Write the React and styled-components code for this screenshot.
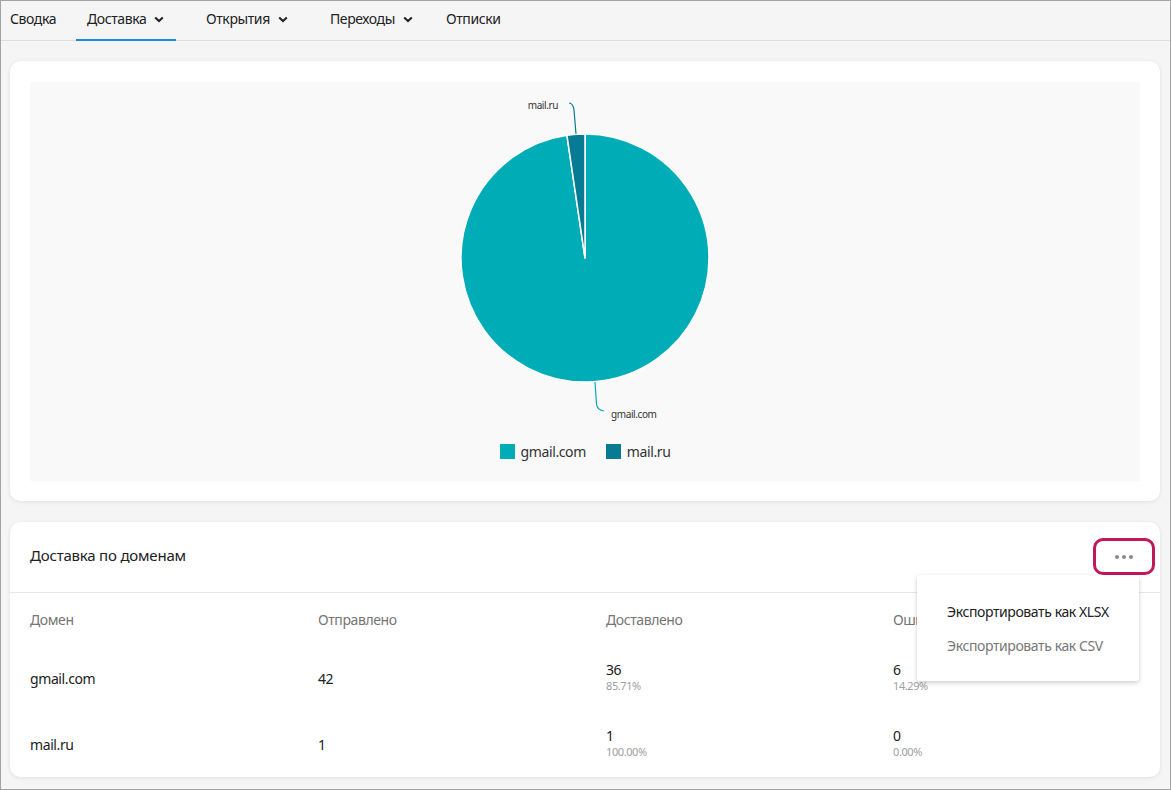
import React from "react";
import styled, { createGlobalStyle } from "styled-components";

const Global = createGlobalStyle`
  html, body { margin: 0; padding: 0; }
  body { font-family: "Noto Sans", "Open Sans", sans-serif; color: #212121; letter-spacing: -0.4px; }
  * { box-sizing: border-box; }
`;

const Frame = styled.div`
  width: 1171px;
  height: 790px;
  border: 1px solid #a3a3a3;
  background: #f5f5f5;
  display: flex;
  flex-direction: column;
  overflow: hidden;
`;

const TabBar = styled.nav`
  height: 40px;
  border-bottom: 1px solid #dedede;
  display: flex;
  align-items: stretch;
  flex-shrink: 0;
`;

const Tab = styled.div`
  position: relative;
  display: flex;
  align-items: center;
  gap: 8px;
  padding-left: ${(p) => p.$pl}px;
  width: ${(p) => p.$w}px;
  margin-right: ${(p) => p.$mr}px;
  font-size: 14px;
  color: #212121;
  padding-bottom: 4px;
  &::after {
    content: "";
    display: ${(p) => (p.$active ? "block" : "none")};
    position: absolute;
    left: 0;
    right: 0;
    bottom: -1px;
    height: 2px;
    background: #1e88e5;
  }
`;

const Chevron = () => (
  <svg width="10" height="7" viewBox="0 0 10 7" style={{ marginTop: 2 }}>
    <path d="M1.2 1.4 L5 5 L8.8 1.4" fill="none" stroke="#212121" strokeWidth="2" />
  </svg>
);

const Content = styled.main`
  flex: 1;
  padding: 20px 9px 0 9px;
  display: flex;
  flex-direction: column;
  gap: 21px;
`;

const Card = styled.section`
  position: relative;
  background: #fff;
  border-radius: 10px;
  box-shadow: 0 1px 4px rgba(0, 0, 0, 0.08), 0 0 1px rgba(0, 0, 0, 0.05);
  width: 1150px;
`;

const ChartCard = styled(Card)`
  height: 440px;
  padding: 21px 20px 20px 20px;
`;

const ChartArea = styled.div`
  background: #f9f9f9;
  height: 399px;
  display: flex;
  flex-direction: column;
  align-items: center;
`;

const Legend = styled.div`
  display: flex;
  align-items: center;
  gap: 20px;
  margin-top: 4px;
  height: 20px;
`;

const LegendItem = styled.div`
  display: flex;
  align-items: center;
  gap: 6px;
  font-size: 14px;
  color: #333;
`;

const Swatch = styled.span`
  width: 15px;
  height: 15px;
  background: ${(p) => p.$c};
  display: inline-block;
`;

const TableCard = styled(Card)`
  height: 255px;
`;

const CardHeader = styled.header`
  height: 71px;
  border-bottom: 1px solid #e6e6e6;
  display: flex;
  align-items: center;
  justify-content: space-between;
  padding: 0 5px 4px 20px;
`;

const Title = styled.h2`
  margin: 0;
  font-size: 15px;
  font-weight: 400;
  letter-spacing: -0.2px;
  color: #212121;
`;

const MoreButton = styled.button`
  width: 62px;
  height: 37px;
  border: 3px solid #c2185b;
  border-radius: 10px;
  background: #fff;
  display: flex;
  align-items: center;
  justify-content: center;
  gap: 3px;
  padding: 0;
  margin-top: 3px;
`;

const Dot = styled.span`
  width: 4px;
  height: 4px;
  border-radius: 50%;
  background: #8a8a8a;
`;

const Menu = styled.div`
  position: absolute;
  top: 53px;
  right: 21px;
  width: 222px;
  padding: 19px 0 19px 0;
  background: #fff;
  border-radius: 3px;
  box-shadow: 0 2px 5px rgba(0, 0, 0, 0.18), 0 0 2px rgba(0, 0, 0, 0.06);
  z-index: 2;
`;

const MenuItem = styled.div`
  height: 34px;
  padding-left: 30px;
  display: flex;
  align-items: center;
  font-size: 14px;
  color: ${(p) => (p.$muted ? "#777" : "#212121")};
`;

const Row = styled.div`
  display: grid;
  grid-template-columns: 288px 288px 287px 1fr;
  padding-left: 20px;
  height: ${(p) => p.$h}px;
  align-items: center;
`;

const HeadCell = styled.div`
  font-size: 14px;
  color: #757575;
`;

const Cell = styled.div`
  font-size: 14px;
  color: #212121;
`;

const Stack = styled.div`
  display: flex;
  flex-direction: column;
  margin-top: -2px;
`;

const Main = styled.span`
  font-size: 14px;
  line-height: 18px;
  color: #212121;
`;

const Sub = styled.span`
  font-size: 11px;
  line-height: 14px;
  color: #9e9e9e;
`;

const GMAIL = "#00adb7";
const MAILRU = "#067b93";

function Pie() {
  const cx = 150, cy = 176, r = 124;
  const a = (1 / 43) * 2 * Math.PI;
  const x2 = cx - r * Math.sin(a);
  const y2 = cy - r * Math.cos(a);
  return (
    <svg width="300" height="355" viewBox="0 0 300 355">
      <path
        d={`M${cx} ${cy} L${cx} ${cy - r} A${r} ${r} 0 1 1 ${x2} ${y2} Z`}
        fill={GMAIL}
        stroke="#fff"
        strokeWidth="1.5"
        strokeLinejoin="round"
      />
      <path
        d={`M${cx} ${cy} L${x2} ${y2} A${r} ${r} 0 0 1 ${cx} ${cy - r} Z`}
        fill={MAILRU}
        stroke="#fff"
        strokeWidth="1.5"
        strokeLinejoin="round"
      />
      <path d="M134 21 Q138 21 139 28 L141 52" fill="none" stroke={MAILRU} strokeWidth="1.2" />
      <text x="123" y="27" fontSize="10" textAnchor="end" fill="#333" fontFamily="Noto Sans, sans-serif">
        mail.ru
      </text>
      <path d="M160 300 L161.5 322 Q162 328 169 329" fill="none" stroke={GMAIL} strokeWidth="1.2" />
      <text x="176" y="336" fontSize="10" fill="#333" fontFamily="Noto Sans, sans-serif">
        gmail.com
      </text>
    </svg>
  );
}

const rows = [
  { d: "gmail.com", s: "42", ok: "36", okp: "85.71%", er: "6", erp: "14.29%" },
  { d: "mail.ru", s: "1", ok: "1", okp: "100.00%", er: "0", erp: "0.00%" },
];

export default function App() {
  return (
    <>
      <Global />
      <Frame>
        <TabBar>
          <Tab $pl={9} $w={65} $mr={10}>Сводка</Tab>
          <Tab $pl={11} $w={100} $mr={20} $active>
            Доставка <Chevron />
          </Tab>
          <Tab $pl={10} $w={104} $mr={20}>
            Открытия <Chevron />
          </Tab>
          <Tab $pl={10} $w={106} $mr={10}>
            Переходы <Chevron />
          </Tab>
          <Tab $pl={10} $w={80} $mr={0}>Отписки</Tab>
        </TabBar>
        <Content>
          <ChartCard>
            <ChartArea>
              <Pie />
              <Legend>
                <LegendItem>
                  <Swatch $c={GMAIL} />
                  gmail.com
                </LegendItem>
                <LegendItem>
                  <Swatch $c={MAILRU} />
                  mail.ru
                </LegendItem>
              </Legend>
            </ChartArea>
          </ChartCard>
          <TableCard>
            <CardHeader>
              <Title>Доставка по доменам</Title>
              <MoreButton>
                <Dot />
                <Dot />
                <Dot />
              </MoreButton>
            </CardHeader>
            <Menu>
              <MenuItem>Экспортировать как XLSX</MenuItem>
              <MenuItem $muted>Экспортировать как CSV</MenuItem>
            </Menu>
            <Row $h={52}>
              <HeadCell>Домен</HeadCell>
              <HeadCell>Отправлено</HeadCell>
              <HeadCell>Доставлено</HeadCell>
              <HeadCell>Ошибки</HeadCell>
            </Row>
            {rows.map((r) => (
              <Row key={r.d} $h={66}>
                <Cell>{r.d}</Cell>
                <Cell>{r.s}</Cell>
                <Stack>
                  <Main>{r.ok}</Main>
                  <Sub>{r.okp}</Sub>
                </Stack>
                <Stack>
                  <Main>{r.er}</Main>
                  <Sub>{r.erp}</Sub>
                </Stack>
              </Row>
            ))}
          </TableCard>
        </Content>
      </Frame>
    </>
  );
}
